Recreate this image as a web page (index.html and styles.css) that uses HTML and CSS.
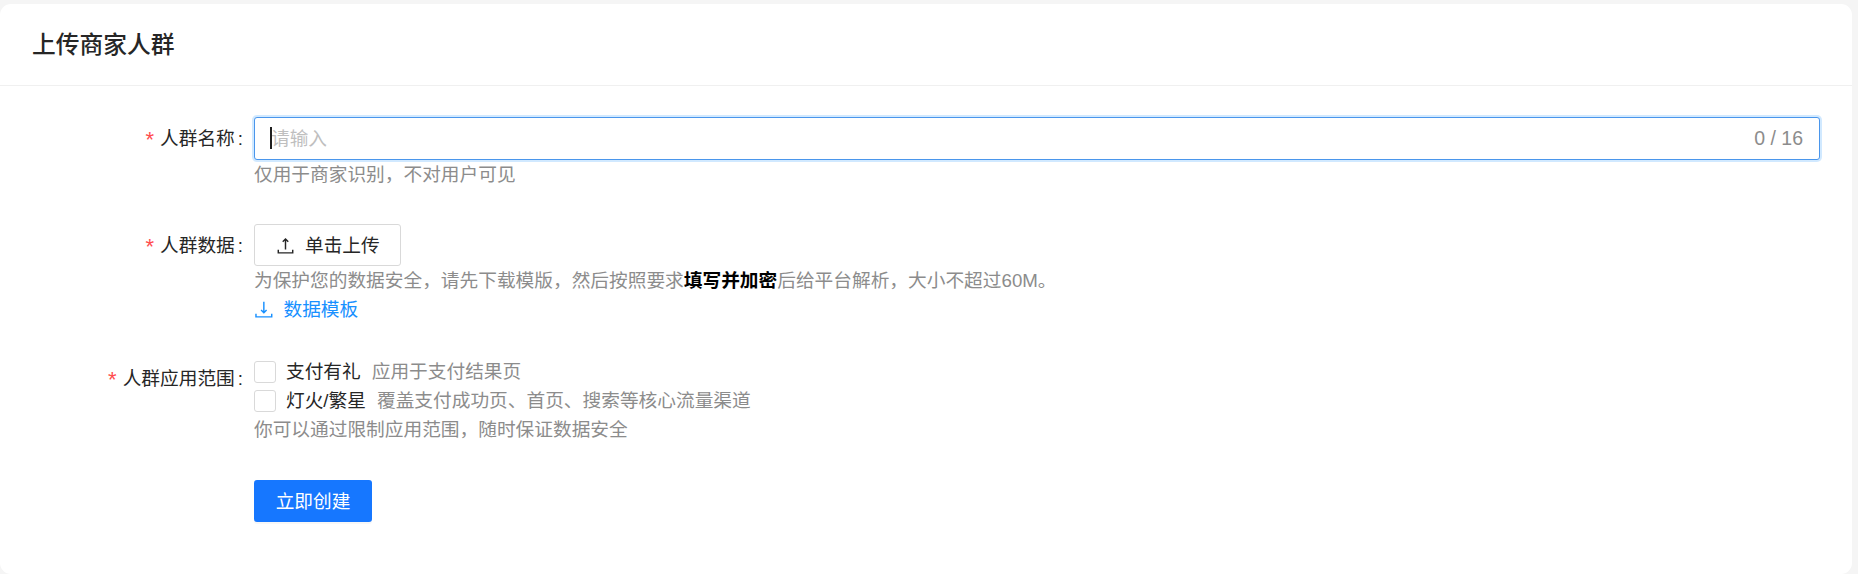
FILE: index.html
```html
<!DOCTYPE html>
<html lang="zh-CN">
<head>
  <meta charset="UTF-8">
  <meta name="viewport" content="width=device-width, initial-scale=1.0">
  <title>上传商家人群</title>
  <link rel="stylesheet" href="styles.css">
</head>
<body>
  <div class="card">
    <div class="card-header">上传商家人群</div>
    <form class="card-body">
      <div class="form-item item-name">
        <label class="form-label"><span class="star">*</span>人群名称<span class="colon">:</span></label>
        <div class="form-control">
          <div class="input-wrap">
            <input type="text" class="text-input" placeholder="请输入">
            <span class="caret"></span>
            <span class="counter">0 / 16</span>
          </div>
          <div class="hint">仅用于商家识别，不对用户可见</div>
        </div>
      </div>

      <div class="form-item item-data">
        <label class="form-label"><span class="star">*</span>人群数据<span class="colon">:</span></label>
        <div class="form-control">
          <button type="button" class="upload-btn">
            <svg class="icon" viewBox="0 0 16 16" fill="none" stroke="currentColor" stroke-width="1.1">
              <path d="M8 11V3.2M5.9 5.2 8 3.1l2.1 2.1M2.5 11.2v2.4h11v-2.4"/>
            </svg>
            单击上传
          </button>
          <div class="hint">为保护您的数据安全，请先下载模版，然后按照要求<b>填写并加密</b>后给平台解析，大小不超过60M。</div>
          <a class="template-link" href="#">
            <svg class="icon" viewBox="0 0 16 16" fill="none" stroke="currentColor" stroke-width="1.1">
              <path d="M7.5 2v8.4M5.4 8.4l2.1 2.1 2.1-2.1M1.5 11.2v2.4h12v-2.4"/>
            </svg>
            数据模板
          </a>
        </div>
      </div>

      <div class="form-item item-scope">
        <label class="form-label"><span class="star">*</span>人群应用范围<span class="colon">:</span></label>
        <div class="form-control">
          <div class="check-row">
            <span class="checkbox"></span>
            <span class="check-text">支付有礼</span>
            <span class="check-desc">应用于支付结果页</span>
          </div>
          <div class="check-row">
            <span class="checkbox"></span>
            <span class="check-text">灯火/繁星</span>
            <span class="check-desc">覆盖支付成功页、首页、搜索等核心流量渠道</span>
          </div>
          <div class="hint">你可以通过限制应用范围，随时保证数据安全</div>
        </div>
      </div>

      <div class="form-item item-submit">
        <div class="form-label"></div>
        <div class="form-control">
          <button type="button" class="submit-btn">立即创建</button>
        </div>
      </div>
    </form>
  </div>
</body>
</html>
```

FILE: styles.css
```css
* { margin: 0; padding: 0; box-sizing: border-box; }
body {
  font-family: "Liberation Sans", "Noto Sans CJK SC", sans-serif;
  font-size: 18.7px;
  line-height: 29px;
  color: #262626;
  background: #f5f5f5;
  height: 574px;
  overflow: hidden;
  padding: 4px 6px 0 0;
}
.card {
  background: #fff;
  border-radius: 11px;
  height: 570px;
}
.card-header {
  height: 82px;
  padding: 26px 0 0 32px;
  font-size: 23.76px;
  font-weight: 500;
  line-height: 30px;
  border-bottom: 1px solid #f0f0f0;
}
.card-body { padding-top: 31px; }

.form-item { display: flex; }
.item-data { margin-top: 35px; }
.item-scope { margin-top: 33px; }
.item-submit { margin-top: 36px; }

.form-label {
  flex: 0 0 254px;
  padding-top: 7px;
  padding-right: 11px;
  text-align: right;
  white-space: nowrap;
}
.star {
  color: #ff4d4f;
  margin-right: 6px;
  font-size: 22px;
  line-height: 1;
  vertical-align: -2px;
}
.colon { margin-left: 3px; }
.form-control {
  flex: 1;
  margin-right: 32px;
}

.input-wrap { position: relative; }
.text-input {
  display: block;
  width: 100%;
  height: 43px;
  padding: 0 16px;
  border: 1px solid #4a96ec;
  border-radius: 3px;
  box-shadow: 0 0 0 2px rgba(24, 144, 255, 0.2);
  font: inherit;
  color: #262626;
  outline: none;
}
.text-input::placeholder { color: #bfbfbf; }
.caret {
  position: absolute;
  left: 16px;
  top: 10px;
  width: 2px;
  height: 22px;
  background: #1f1f1f;
}
.counter {
  position: absolute;
  right: 17px;
  top: 7px;
  color: #8c8c8c;
  font-size: 19.5px;
}

.hint { color: #8c8c8c; }
.hint b { color: #000; font-weight: 700; }

.icon {
  width: 21px;
  height: 21px;
  flex: none;
}
.upload-btn {
  display: flex;
  align-items: center;
  gap: 9px;
  width: 147px;
  height: 42px;
  padding-left: 20px;
  background: #fff;
  border: 1px solid #d9d9d9;
  border-radius: 3px;
  font: inherit;
  color: #262626;
}
.template-link {
  display: flex;
  align-items: center;
  gap: 8.5px;
  color: #1890ff;
  text-decoration: none;
}

.check-row {
  display: flex;
  align-items: center;
  height: 29px;
}
.checkbox {
  width: 22px;
  height: 22px;
  background: #fff;
  border: 1px solid #d9d9d9;
  border-radius: 3px;
  margin-right: 10px;
}
.check-text { margin-right: 11px; }
.check-desc { color: #8c8c8c; }

.submit-btn {
  display: block;
  width: 118px;
  height: 42px;
  background: #1677ff;
  border: none;
  border-radius: 3px;
  box-shadow: 0 2px 0 rgba(0, 0, 0, 0.03);
  color: #fff;
  font: inherit;
}
```
